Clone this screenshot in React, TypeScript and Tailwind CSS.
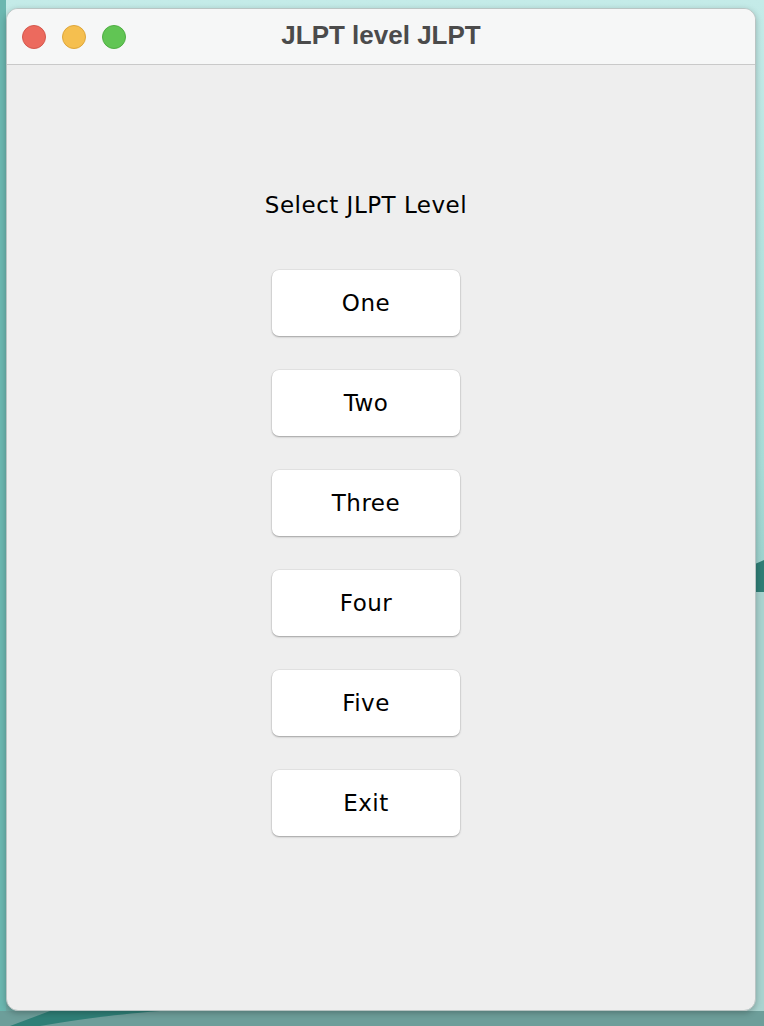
import React from 'react';

const levels = ['One', 'Two', 'Three', 'Four', 'Five', 'Exit'];

export default function App() {
  return (
    <div className="relative w-[764px] h-[1026px] overflow-hidden bg-[linear-gradient(180deg,#c4ebe8_0%,#a8dcd7_45%,#6fa9a4_100%)]">
      {/* desktop wave behind the window */}
      <svg className="absolute inset-0" width="764" height="1026" viewBox="0 0 764 1026">
        <path d="M0 0 L 6 0 L 6 1026 L 0 1026 Z" fill="#6bb7b0" />
        <path d="M764 585 C 720 600, 640 660, 560 1026 L 764 1026 Z" fill="#a9d3cf" />
        <path d="M764 560 C 740 570, 724 580, 756 592 L 764 592 Z" fill="#2f7d75" />
        <path d="M0 1011 L 764 1011 L 764 1026 L 0 1026 Z" fill="#6d9e9a" />
        <path d="M10 1026 L 50 1011 L 160 1011 C 100 1016, 70 1021, 40 1026 Z" fill="#2f7f77" />
      </svg>

      <div className="relative pt-[8px] pl-[6px] pr-[8px]">
        <div className="flex flex-col h-[1003px] rounded-[12px] overflow-hidden border border-[#b9c4c3] bg-[#eeeeee] shadow-[0_2px_6px_rgba(0,0,0,0.25)]">
          {/* title bar */}
          <div className="relative flex items-center h-[56px] shrink-0 bg-[#f6f7f7] border-b border-[#c9c9c9]">
            <div className="flex items-center gap-[16px] pl-[15px]">
              <span className="w-[24px] h-[24px] rounded-full bg-[#ec6a5e] border border-[#d4584d]" />
              <span className="w-[24px] h-[24px] rounded-full bg-[#f5bf4f] border border-[#dea63a]" />
              <span className="w-[24px] h-[24px] rounded-full bg-[#61c554] border border-[#4fae43]" />
            </div>
            <div className="absolute inset-0 flex items-center justify-center pointer-events-none">
              <span className="font-['Liberation_Sans',Arial,sans-serif] font-bold text-[26px] text-[#4b4b4b] -mt-[2px]">
                JLPT level JLPT
              </span>
            </div>
          </div>

          {/* content */}
          <div className="flex flex-col items-center pt-[126px] pr-[30px] font-['DejaVu_Sans',sans-serif] text-black">
            <div className="h-[28px] leading-[28px] text-[23px] tracking-[0.5px]">Select JLPT Level</div>
            <div className="flex flex-col gap-[34px] mt-[51px]">
              {levels.map((label) => (
                <button
                  key={label}
                  className="w-[188px] h-[66px] rounded-[7px] bg-white text-[23px] tracking-[0.5px] text-black shadow-[0_1px_2px_rgba(0,0,0,0.3),0_0_0_0.5px_rgba(0,0,0,0.08)]"
                >
                  {label}
                </button>
              ))}
            </div>
          </div>
        </div>
      </div>
    </div>
  );
}
